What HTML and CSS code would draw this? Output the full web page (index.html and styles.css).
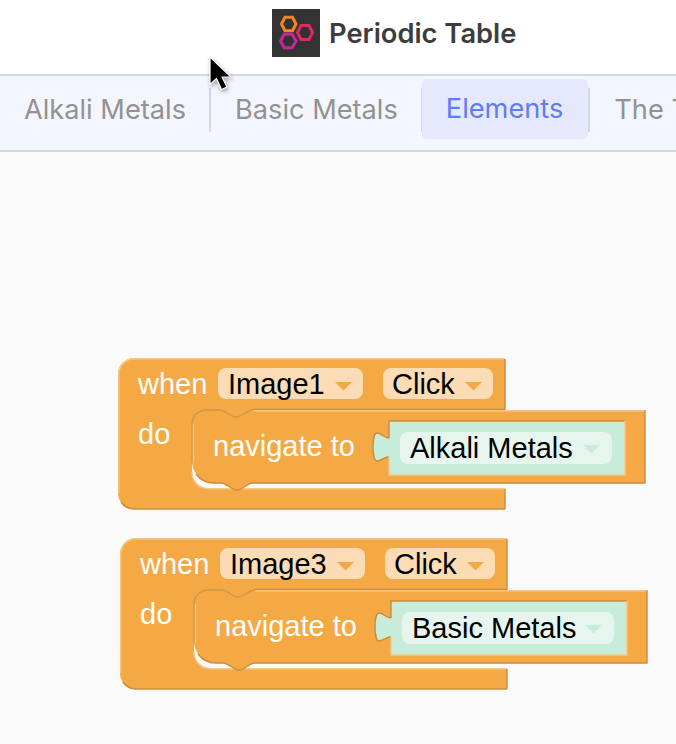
FILE: index.html
```html
<!DOCTYPE html>
<html lang="en">
<head>
<meta charset="utf-8">
<title>Periodic Table</title>
<link rel="stylesheet" href="styles.css">
</head>
<body>
<div class="app">
  <header class="header">
    <svg class="logo" width="48" height="48" viewBox="0 0 48 48">
      <rect width="48" height="48" fill="#333333"/>
      <path class="hex hex-orange" d="M9.500 15 13 8.200h7.500L24 15l-3.500 6.800H13z"/>
      <path class="hex hex-red" d="M25.500 23.500 29 16.500h8l3.600 7-3.600 7h-8z"/>
      <path class="hex hex-magenta" d="M8.500 32 12.200 25.200h8L24 32l-3.800 6.800h-8z"/>
    </svg>
    <span class="title">Periodic Table</span>
  </header>
  <nav class="tabs">
    <span class="tab">Alkali Metals</span>
    <span class="divider"></span>
    <span class="tab">Basic Metals</span>
    <span class="divider"></span>
    <span class="tab tab-active">Elements</span>
    <span class="divider"></span>
    <span class="tab">The Transition Metals</span>
  </nav>
  <main class="canvas">
    <svg class="block block-one" width="530" height="154" viewBox="0 0 530 154">
      <path class="orange" d="M16 0H387V52H135c-6 0-11 7-17 7s-10-7-16-7H88a14 14 0 0 0-14 14V114a16 16 0 0 0 16 16H387V151H16a16 16 0 0 1-16-16V16A16 16 0 0 1 16 0Z"/>
      <path class="edge-light" d="M.8 135V16A15.200 15.200 0 0 1 16 .8H387M74 114a16 16 0 0 0 16 16.700H387"/>
      <path class="edge-dark" d="M387 1V51.500H135M387 151H16A16 16 0 0 1 3 144M387 131V151"/>
      <path class="orange" d="M88 52H102c6 0 10 7 16 7s11-7 17-7H527V125H135c-6 0-10 7-16 7s-10-7-16-7H96a22 22 0 0 1-22-20V66a14 14 0 0 1 14-14Z"/>
      <path class="edge-dark-soft" d="M74 105V66a14 14 0 0 1 14-14H102c6 0 10 7 16 7s11-7 17-7"/>
      <path class="edge-light" d="M135 52.800H527M75.500 66V105"/>
      <path class="edge-dark" d="M527 52V125H135c-6 0-10 7-16 7s-10-7-16-7H96a22 22 0 0 1-18-9"/>
      <path class="value" d="M271 63H507V117H271V99c-5 0-8 4-12 4c-3 0-4-8-4-14s1-14 4-14c4 0 7 5 12 5Z"/>
      <path class="edge-dark" d="M271 80c-5 0-8-5-12-5c-3 0-4 8-4 14s1 14 4 14c4 0 7-4 12-4M271 80V63H507"/>
      <path class="edge-light" d="M271 99V117H507V63"/>
      <rect class="field" x="100" y="10" width="145" height="31" rx="8"/>
      <rect class="field" x="265" y="10" width="110" height="31" rx="8"/>
      <rect class="field-value" x="282" y="74" width="212" height="32" rx="8"/>
      <path class="arrow" d="M217 24h17l-8.500 8.500z"/>
      <path class="arrow" d="M347 24h17l-8.500 8.500z"/>
      <path class="arrow-value" d="M465 87h17l-8.500 8.500z"/>
      <text class="label" x="20" y="36">when</text>
      <text class="label" x="20" y="86">do</text>
      <text class="label" x="95" y="98">navigate to</text>
      <text class="text" x="110" y="36">Image1</text>
      <text class="text" x="274" y="36">Click</text>
      <text class="text" x="292" y="100">Alkali Metals</text>
    </svg>
    <svg class="block block-two" width="530" height="154" viewBox="0 0 530 154">
      <path class="orange" d="M16 0H387V52H135c-6 0-11 7-17 7s-10-7-16-7H88a14 14 0 0 0-14 14V114a16 16 0 0 0 16 16H387V151H16a16 16 0 0 1-16-16V16A16 16 0 0 1 16 0Z"/>
      <path class="edge-light" d="M.8 135V16A15.200 15.200 0 0 1 16 .8H387M74 114a16 16 0 0 0 16 16.700H387"/>
      <path class="edge-dark" d="M387 1V51.500H135M387 151H16A16 16 0 0 1 3 144M387 131V151"/>
      <path class="orange" d="M88 52H102c6 0 10 7 16 7s11-7 17-7H527V125H135c-6 0-10 7-16 7s-10-7-16-7H96a22 22 0 0 1-22-20V66a14 14 0 0 1 14-14Z"/>
      <path class="edge-dark-soft" d="M74 105V66a14 14 0 0 1 14-14H102c6 0 10 7 16 7s11-7 17-7"/>
      <path class="edge-light" d="M135 52.800H527M75.500 66V105"/>
      <path class="edge-dark" d="M527 52V125H135c-6 0-10 7-16 7s-10-7-16-7H96a22 22 0 0 1-18-9"/>
      <path class="value" d="M271 63H507V117H271V99c-5 0-8 4-12 4c-3 0-4-8-4-14s1-14 4-14c4 0 7 5 12 5Z"/>
      <path class="edge-dark" d="M271 80c-5 0-8-5-12-5c-3 0-4 8-4 14s1 14 4 14c4 0 7-4 12-4M271 80V63H507"/>
      <path class="edge-light" d="M271 99V117H507V63"/>
      <rect class="field" x="100" y="10" width="145" height="31" rx="8"/>
      <rect class="field" x="265" y="10" width="110" height="31" rx="8"/>
      <rect class="field-value" x="282" y="74" width="212" height="32" rx="8"/>
      <path class="arrow" d="M217 24h17l-8.500 8.500z"/>
      <path class="arrow" d="M347 24h17l-8.500 8.500z"/>
      <path class="arrow-value" d="M465 87h17l-8.500 8.500z"/>
      <text class="label" x="20" y="36">when</text>
      <text class="label" x="20" y="86">do</text>
      <text class="label" x="95" y="98">navigate to</text>
      <text class="text" x="110" y="36">Image3</text>
      <text class="text" x="274" y="36">Click</text>
      <text class="text" x="292" y="100">Basic Metals</text>
    </svg>
  </main>
</div>
<svg class="cursor" width="30" height="40" viewBox="0 0 30 40">
  <path class="cursor-arrow" d="M3 1V28.500L9.500 22.500 14.500 33.500 20 31 15 21H24Z"/>
</svg>
</body>
</html>
```

FILE: styles.css
```css
html, body {
  margin: 0;
  height: 100%;
  overflow: hidden;
  background: #ffffff;
}

.app {
  display: flex;
  flex-direction: column;
  height: 744px;
  overflow: hidden;
}

.header {
  display: flex;
  align-items: center;
  gap: 9px;
  height: 74px;
  padding: 0 0 8px 272px;
  box-sizing: border-box;
  flex: none;
}

.logo {
  display: block;
  flex: none;
}

.hex {
  fill: none;
  stroke-width: 3;
}

.hex-orange { stroke: #f0871e; }
.hex-red { stroke: #e3285f; }
.hex-magenta { stroke: #c8269b; }

.title {
  font-family: Inter, "Liberation Sans", sans-serif;
  font-size: 27.300px;
  font-weight: 600;
  color: #3d3d3d;
  white-space: nowrap;
}

.tabs {
  display: flex;
  align-items: center;
  flex: none;
  height: 78px;
  padding-bottom: 8px;
  box-sizing: border-box;
  border-top: 2px solid #cfd9ea;
  border-bottom: 2px solid #cfd9ea;
  background: #f3f6fc;
  overflow: hidden;
  white-space: nowrap;
}

.tab {
  flex: none;
  height: 44px;
  line-height: 44px;
  margin-top: 1px;
  padding: 0 23px 0 24px;
  box-sizing: border-box;
  font-family: Inter, "Liberation Sans", sans-serif;
  font-size: 27.200px;
  color: #929292;
}

.divider {
  flex: none;
  width: 2px;
  height: 44px;
  margin-top: 2px;
  background: #cfd9ea;
}

.tab-active {
  height: 60px;
  line-height: 60px;
  margin: 0 0 0 -1px;
  padding-right: 25px;
  border-radius: 5px;
  background: #e6e9fd;
  color: #5f7cf8;
}

.canvas {
  position: relative;
  flex: 1;
  background: #fafafa;
  overflow: hidden;
}

.block {
  position: absolute;
  display: block;
}

.block-one { left: 118px; top: 206px; }
.block-two { left: 120px; top: 386px; }

.orange { fill: #f4a945; }
.value { fill: #c7ecd9; }
.field { fill: #fbdcb4; }
.field-value { fill: #e6f6ee; }
.arrow { fill: #f4a945; }
.arrow-value { fill: #c7ecd9; }

.edge-light, .edge-dark, .edge-dark-soft {
  fill: none;
  stroke-width: 1.400;
}

.edge-light { stroke: #f8c785; }
.edge-dark { stroke: #c98c3c; }
.edge-dark-soft { stroke: #d0954a; }

.label, .text {
  font-family: "Liberation Sans", Arial, sans-serif;
  font-size: 29px;
}

.label { fill: #ffffff; }
.text { fill: #000000; }

.cursor {
  position: absolute;
  left: 207px;
  top: 56px;
  filter: drop-shadow(1px 2px 2px rgba(0, 0, 0, 0.35));
}

.cursor-arrow {
  fill: #000000;
  stroke: #ffffff;
  stroke-width: 1.200;
  stroke-linejoin: round;
}
```
